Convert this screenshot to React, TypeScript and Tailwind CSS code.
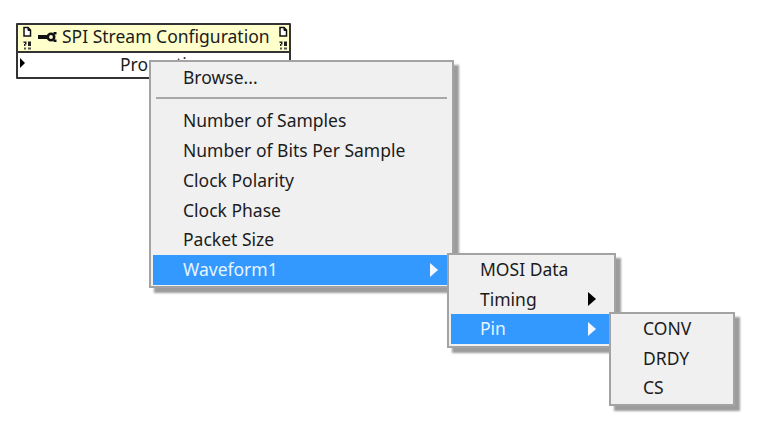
const font = "font-['Noto_Sans',sans-serif]";

type RowProps = { label: string; active?: boolean; arrow?: boolean; arrowClass?: string; height?: string };

const MenuRow = ({ label, active, arrow, arrowClass, height = "h-[30px]" }: RowProps) => (
  <div className={`flex shrink-0 items-center text-[17.5px] leading-none ${height} ${active ? "bg-[#3399ff] text-[#e8f4ff]" : "text-[#1c1c1c]"}`}>
    <span className="flex-1 whitespace-nowrap">{label}</span>
    {arrow && (
      <svg width="8" height="14" viewBox="0 0 8 14" className={arrowClass}>
        <path d="M0 0 L8 7 L0 14 Z" fill={active ? "#f4f9ff" : "#000"} />
      </svg>
    )}
  </div>
);

const DocIcon = () => (
  <svg width="10" height="25" viewBox="0 0 10 25" className="shrink-0">
    <path d="M2 1.5 H6 L8.5 4 V10 H2 Z" fill="#fff" stroke="#111" strokeWidth="1.5" />
    <path d="M6 1.5 V4.5 H8.5" fill="#111" stroke="#111" />
    <path d="M1.5 15.5 H4.5 V18.5 H3.4 V20 H2 V18 H3 V17 H1.5 Z" fill="#222" />
    <rect x="6" y="15.5" width="3" height="4.5" fill="#222" />
    <rect x="2" y="21.5" width="2" height="2" fill="#555" />
    <rect x="6" y="21.5" width="3" height="2" fill="#555" />
  </svg>
);

const WireIcon = () => (
  <svg width="19" height="12" viewBox="0 0 19 12" className="shrink-0">
    <rect x="0" y="4" width="10" height="4" fill="#111" />
    <circle cx="13" cy="6" r="3.2" fill="#fffdcc" stroke="#111" strokeWidth="2.6" />
    <rect x="15.5" y="1" width="3" height="2.5" fill="#111" />
    <rect x="15.5" y="8.5" width="3" height="2.5" fill="#111" />
  </svg>
);

const menuBox =
  "absolute border-2 border-[#a3a3a3] bg-[#f0f0f0] shadow-[5px_5px_2px_rgba(90,90,90,0.6)]";

export default function App() {
  return (
    <div className={`relative h-[434px] w-[759px] overflow-hidden bg-white ${font}`}>
      {/* property node */}
      <div className="absolute left-4 top-[23px] w-[275px] rounded-[1px] border-2 border-[#333]">
        <div className="flex h-[28px] items-center border-b-2 border-[#333] bg-[#ffffcc] pl-[4px] pr-[1px]">
          <DocIcon />
          <div className="ml-[6px] flex items-center gap-[5px] pb-[2px] text-[17.5px] leading-none text-[#1c1c1c]">
            <WireIcon />
            <span className="whitespace-nowrap">SPI Stream Configuration</span>
          </div>
          <span className="ml-auto">
            <DocIcon />
          </span>
        </div>
        <div className="relative h-[24px] bg-white pl-[18px] text-center text-[17.5px] leading-[22px] text-[#1c1c1c]">
          <svg width="5" height="10" viewBox="0 0 5 10" className="absolute left-[2px] top-[5px]">
            <path d="M0 0 L5 5 L0 10 Z" fill="#000" />
          </svg>
          Properties
        </div>
      </div>

      {/* main menu */}
      <div className={`${menuBox} left-[149px] top-[60px] flex h-[228px] w-[305px] flex-col px-[2px] pt-[1px] [&>div:not(.sep)]:pl-[30px]`}>
        <MenuRow label="Browse..." />
        <div className="sep mx-[3px] mb-[7px] mt-[4px] h-[2px] shrink-0 bg-[#a8a8a8]" />
        <MenuRow label="Number of Samples" height="h-[29.8px]" />
        <MenuRow label="Number of Bits Per Sample" height="h-[29.8px]" />
        <MenuRow label="Clock Polarity" height="h-[29.8px]" />
        <MenuRow label="Clock Phase" height="h-[29.8px]" />
        <MenuRow label="Packet Size" height="h-[29.8px]" />
        <MenuRow label="Waveform1" active arrow arrowClass="mr-[12px]" />
      </div>

      {/* waveform submenu */}
      <div className={`${menuBox} left-[447px] top-[253px] flex h-[95px] w-[169px] flex-col px-[2px] [&>div]:pl-[29px]`}>
        <MenuRow label="MOSI Data" height="h-[29.5px]" />
        <MenuRow label="Timing" arrow arrowClass="mr-[16px]" height="h-[29.5px]" />
        <MenuRow label="Pin" active arrow arrowClass="mr-[16px]" />
      </div>

      {/* pin submenu */}
      <div className={`${menuBox} left-[609px] top-[312px] flex h-[94px] w-[126px] flex-col px-[2px] [&>div]:pl-[30px]`}>
        <MenuRow label="CONV" />
        <MenuRow label="DRDY" height="h-[29.5px]" />
        <MenuRow label="CS" height="h-[29px]" />
      </div>
    </div>
  );
}
